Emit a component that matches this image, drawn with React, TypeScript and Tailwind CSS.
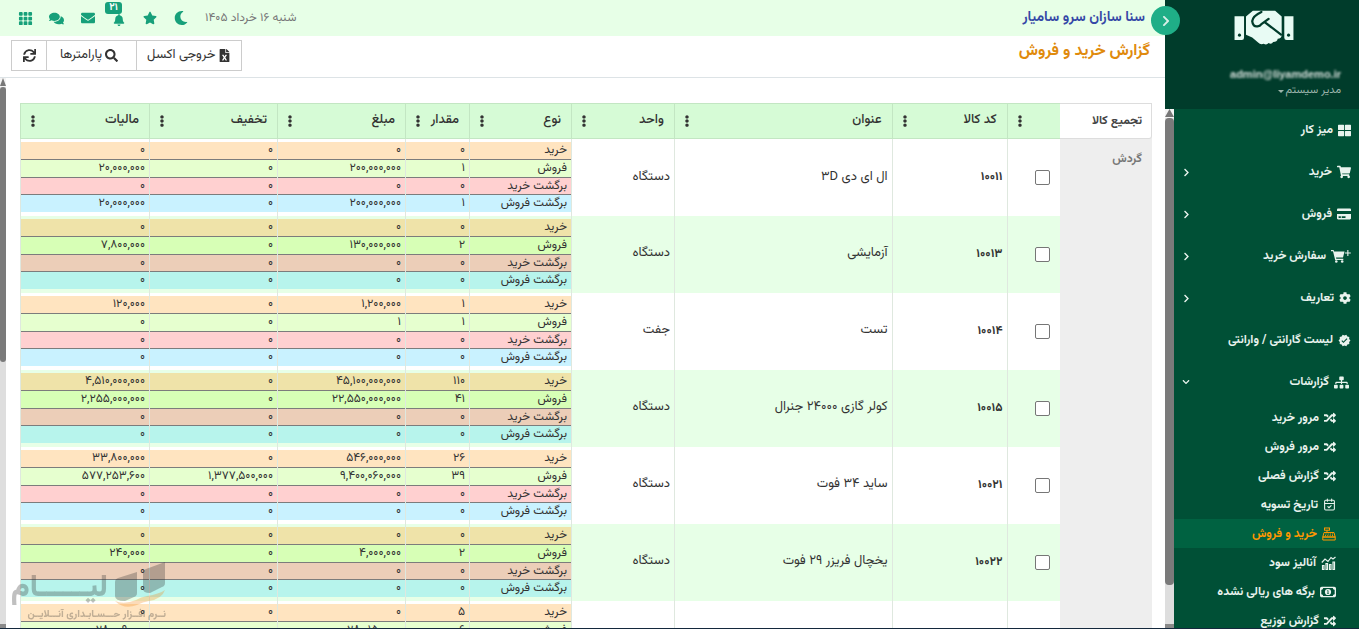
import type { ReactNode } from "react";
import { FaShoppingCart, FaCog, FaSitemap, FaRandom, FaChevronRight, FaChevronDown, FaStar, FaBell, FaEnvelope, FaComments, FaMoon, FaSearch, FaFileExcel, FaEllipsisV, FaSync, FaThLarge, FaCreditCard } from "react-icons/fa";
import { FaRegMoneyBill1 } from "react-icons/fa6";
import { MdVerified } from "react-icons/md";
import { BsGrid3X3GapFill } from "react-icons/bs";
import { CalendarCheck } from "lucide-react";

type Item = { label: string; icon: ReactNode; open?: boolean; arrow?: boolean };

const Handshake = () => (
  <svg viewBox="0 0 180 110" className="mt-[10px] h-9 w-[60px] shrink-0 self-center text-[#e8fbf4]" aria-hidden="true">
    <path fill="currentColor" fillRule="evenodd" d="M0 19h29v66q0 7-7 7H0zM15 72a5 5 0 1 0 .1 0zM152 19h28v73h-21q-7 0-7-7zM165 72a5 5 0 1 0 .1 0z" />
    <path fill="currentColor" d="M56 2h68l20 18v58q-2 10-12 10-2 10-14 10-5 8-14 3-6 7-15 2-10 4-17-4L54 84l-19-8V20z" />
    <path fill="none" stroke="#003c2b" strokeWidth="7" strokeLinecap="round" strokeLinejoin="round" d="M82 6Q56 18 54 34q2 18 16 16 8-1 12-7l22-16M92 37l50 38" />
  </svg>
);

const CartPlus = () => (
  <svg viewBox="0 0 20 14" className="h-[14px] w-5" fill="currentColor" aria-hidden="true">
    <path d="M0 1h2.600l.5 1.600h10.400l-1.500 6H5l.3 1.200h7v1.300H4.200L2 2.300H0z" />
    <circle cx="5.300" cy="12.500" r="1.300" />
    <circle cx="11.200" cy="12.500" r="1.300" />
    <path d="M16.300 1h1.100v2.400h2.400v1.100h-2.400v2.400h-1.100V4.500h-2.400V3.400h2.400z" />
  </svg>
);

const Register = () => (
  <svg viewBox="0 0 14 14" className="size-[14px]" fill="none" stroke="currentColor" strokeWidth="1" aria-hidden="true">
    <rect x="2.500" y="1" width="5" height="2.200" />
    <path d="M5 3.200v2.300M2 5.500h10l1.200 4.500H.8zM.8 10h12.400v3H.8z" />
    <path d="M3.500 7h1M5.700 7h1M7.900 7h1M10 7h1M3 8.600h1M5.300 8.600h1M7.700 8.600h1M10 8.600h1" />
  </svg>
);

const Profit = () => (
  <svg viewBox="0 0 15 14" className="h-[14px] w-[15px]" fill="none" stroke="currentColor" strokeWidth="1.200" aria-hidden="true">
    <path d="M.8 6.500 4 3l3 2.500L10 1.500l2 1.500 2.500-2" />
    <path d="M1.500 9.500h1.500v4H1.500zM5 7.500h1.500v6H5zM8.500 8.500H10v5H8.500zM12 6h1.500v7.500H12z" />
  </svg>
);

const menu: Item[] = [
  { label: "میز کار", icon: <FaThLarge className="size-[13px]" /> },
  { label: "خرید", icon: <FaShoppingCart className="size-[14px]" />, arrow: true },
  { label: "فروش", icon: <FaCreditCard className="size-[14px]" />, arrow: true },
  { label: "سفارش خرید", icon: <CartPlus />, arrow: true },
  { label: "تعاریف", icon: <FaCog className="size-3" />, arrow: true },
  { label: "لیست گارانتی / وارانتی", icon: <MdVerified className="size-[13px]" /> },
  { label: "گزارشات", icon: <FaSitemap className="mr-[2px] size-[15px]" />, arrow: true, open: true },
];

const reports: { label: string; icon: ReactNode; active?: boolean }[] = [
  { label: "مرور خرید", icon: <FaRandom className="size-3" /> },
  { label: "مرور فروش", icon: <FaRandom className="size-3" /> },
  { label: "گزارش فصلی", icon: <FaRandom className="size-3" /> },
  { label: "تاریخ تسویه", icon: <CalendarCheck className="size-[13px]" /> },
  { label: "خرید و فروش", icon: <Register />, active: true },
  { label: "آنالیز سود", icon: <Profit /> },
  { label: "برگه های ریالی نشده", icon: <FaRegMoneyBill1 className="size-4" /> },
  { label: "گزارش توزیع", icon: <FaRandom className="size-3" /> },
];

const kinds = ["خرید", "فروش", "برگشت خرید", "برگشت فروش"];
const z4 = ["۰", "۰", "۰", "۰"];

const rows = [
  { code: "۱۰۰۱۱", title: "ال ای دی ۳D", unit: "دستگاه", qty: ["۰", "۱", "۰", "۱"], amount: ["۰", "۲۰۰,۰۰۰,۰۰۰", "۰", "۲۰۰,۰۰۰,۰۰۰"], off: z4, tax: ["۰", "۲۰,۰۰۰,۰۰۰", "۰", "۲۰,۰۰۰,۰۰۰"] },
  { code: "۱۰۰۱۳", title: "آزمایشی", unit: "دستگاه", qty: ["۰", "۲", "۰", "۰"], amount: ["۰", "۱۳۰,۰۰۰,۰۰۰", "۰", "۰"], off: z4, tax: ["۰", "۷,۸۰۰,۰۰۰", "۰", "۰"] },
  { code: "۱۰۰۱۴", title: "تست", unit: "جفت", qty: ["۱", "۱", "۰", "۰"], amount: ["۱,۲۰۰,۰۰۰", "۱", "۰", "۰"], off: z4, tax: ["۱۲۰,۰۰۰", "۰", "۰", "۰"] },
  { code: "۱۰۰۱۵", title: "کولر گازی ۲۴۰۰۰ جنرال", unit: "دستگاه", qty: ["۱۱۰", "۴۱", "۰", "۰"], amount: ["۴۵,۱۰۰,۰۰۰,۰۰۰", "۲۲,۵۵۰,۰۰۰,۰۰۰", "۰", "۰"], off: z4, tax: ["۴,۵۱۰,۰۰۰,۰۰۰", "۲,۲۵۵,۰۰۰,۰۰۰", "۰", "۰"] },
  { code: "۱۰۰۲۱", title: "ساید ۳۴ فوت", unit: "دستگاه", qty: ["۲۶", "۳۹", "۰", "۰"], amount: ["۵۴۶,۰۰۰,۰۰۰", "۹,۴۰۰,۰۶۰,۰۰۰", "۰", "۰"], off: ["۰", "۱,۳۷۷,۵۰۰,۰۰۰", "۰", "۰"], tax: ["۳۳,۸۰۰,۰۰۰", "۵۷۷,۲۵۳,۶۰۰", "۰", "۰"] },
  { code: "۱۰۰۲۲", title: "یخچال فریزر ۲۹ فوت", unit: "دستگاه", qty: ["۰", "۲", "۰", "۰"], amount: ["۰", "۴,۰۰۰,۰۰۰", "۰", "۰"], off: z4, tax: ["۰", "۲۴۰,۰۰۰", "۰", "۰"] },
  { code: "", title: "", unit: "", qty: ["۵", "۶", "۰", "۰"], amount: ["۰", "۲۸۰,۱۵۰,۰۰۰", "۰", "۰"], off: z4, tax: ["۰", "۲۸,۰۰۹,۰۰۰", "۰", "۰"] },
];

const oddBands = ["bg-[#ffe4c0]", "bg-[#e6ffcf]", "bg-[#ffd0d0]", "bg-[#c9f2ff]"];
const evenBands = ["bg-[#efe3a9]", "bg-[#d7ffb6]", "bg-[#ecceb8]", "bg-[#b7f4ec]"];

function Bands({ values, even }: { values: string[]; even: boolean }) {
  const colors = even ? evenBands : oddBands;
  return (
    <td className="border-l border-[#dfe8df] p-0 align-top">
      <div className="pt-[3px]">
        {values.map((v, i) => (
          <div key={i} className={`px-1 leading-4 ${i < 2 ? "h-[18px]" : "h-[17px]"} ${colors[i]} ${i < 3 ? "border-b border-[#7c7c7c]" : ""}`}>{v}</div>
        ))}
      </div>
    </td>
  );
}

const columns = [
  { label: "", w: "w-[53px]" },
  { label: "کد کالا", w: "w-[115px]" },
  { label: "عنوان", w: "" },
  { label: "واحد", w: "w-[103px]" },
  { label: "نوع", w: "w-[102px]" },
  { label: "مقدار", w: "w-[64px]" },
  { label: "مبلغ", w: "w-[128px]" },
  { label: "تخفیف", w: "w-[128px]" },
  { label: "مالیات", w: "w-[129px]" },
];

function Grid() {
  return (
    <table className="w-full table-fixed border-collapse text-xs text-[#333]">
      <thead>
        <tr className="h-[35px] bg-[#d6fbd6]">
          {columns.map((c, i) => (
            <th key={i} className={`border-b border-l border-t border-[#c3e6c3] p-0 text-[13px] font-medium ${c.w}`}>
              <div className="flex items-center justify-between pl-[6px] pr-[10px]">
                <span>{c.label}</span>
                <button aria-label="منوی ستون" className="flex w-3 justify-center"><FaEllipsisV className="size-3" /></button>
              </div>
            </th>
          ))}
        </tr>
      </thead>
      <tbody>
        {rows.map((r, i) => {
          const even = i % 2 === 1;
          return (
            <tr key={i} className={`h-[77px] ${even ? "bg-[#e7ffe7]" : "bg-white"}`}>
              <td className="border-l border-[#dfe8df] p-0 pr-[10px]">
                <input type="checkbox" aria-label={r.title || "انتخاب"} className="block size-[15px] appearance-none rounded-[2px] border border-[#767676] bg-white" />
              </td>
              <td className="border-l border-[#dfe8df] p-0 px-1 font-bold">{r.code}</td>
              <td className="border-l border-[#dfe8df] p-0 px-1 text-[13px]">{r.title}</td>
              <td className="border-l border-[#dfe8df] p-0 px-1 text-[13px]">{r.unit}</td>
              <Bands values={kinds} even={even} />
              <Bands values={r.qty} even={even} />
              <Bands values={r.amount} even={even} />
              <Bands values={r.off} even={even} />
              <Bands values={r.tax} even={even} />
            </tr>
          );
        })}
      </tbody>
    </table>
  );
}

function ScrollRail({ thumb, width }: { thumb: string; width: string }) {
  return (
    <div aria-hidden="true" className={`flex shrink-0 flex-col bg-[#dedede] ${width}`}>
      <svg viewBox="0 0 9 9" preserveAspectRatio="none" className="h-[9px] w-full shrink-0 bg-[#f4f4f4]"><path d="M4.500 0 9 8H0z" fill="#777" /></svg>
      <div className={`rounded-[4px] bg-[#7a7a7a] ${thumb}`} />
      <svg viewBox="0 0 9 4" preserveAspectRatio="none" className="mt-auto h-1 w-full shrink-0"><path d="M0 0h9v4H0z" fill="#8a8a8a" /></svg>
    </div>
  );
}

function Watermark() {
  return (
    <div className="pointer-events-none absolute bottom-[7px] left-[14px] flex w-[152px] flex-col opacity-30">
      <div className="flex h-[44px] items-end gap-[6px]">
        <svg viewBox="0 0 52 48" className="h-12 w-[52px] shrink-0" aria-hidden="true">
          <path d="M29 12q0-3 3-4l19-7v21q0 3-3 4l-12 6q-7 0-7-4z" fill="#333" />
          <path d="M1 21q0-3 3-4l19-6v21q0 3-3 4l-9 4q-10 0-10-5z" fill="#333" />
          <path d="M1 40q9 4 21-1 5-3 11-4 12-2 18-6-3 9-16 11-6 1-12 4-13 5-22-4z" fill="#f28a1c" />
        </svg>
        <span className="whitespace-nowrap text-[30px] font-black leading-[40px] text-[#333]">لیــــــام</span>
      </div>
      <span className="whitespace-nowrap text-[10px] font-black leading-3 text-[#333]">نــرم افــزار حـــسـابـداری آنـــلایــن</span>
    </div>
  );
}

const topIcons = [
  { label: "حالت شب", icon: <FaMoon className="size-[14px]" /> },
  { label: "علاقه مندی", icon: <FaStar className="size-[14px]" /> },
  { label: "اعلان ها", icon: <FaBell className="mt-1 size-3" />, badge: "۲۱" },
  { label: "پیام ها", icon: <FaEnvelope className="size-[14px]" /> },
  { label: "گفتگو", icon: <FaComments className="size-[15px]" /> },
  { label: "برنامه ها", icon: <BsGrid3X3GapFill className="size-[15px]" /> },
];

function Sidebar() {
  return (
    <aside className="flex w-[194px] shrink-0 flex-col bg-[#005036] text-[#e9f3ee]">
      <div className="flex h-[109px] shrink-0 flex-col bg-[#003c2b] pl-1">
        <Handshake />
        <div className="flex flex-col items-start gap-px pr-[18px] pt-5">
          <span dir="ltr" className="font-['Liberation_Sans'] text-[11px] font-bold leading-4 text-[#d5dfdb] blur-[1px]">admin@liyamdemo.ir</span>
          <button className="flex items-center gap-px text-[11px] leading-4 text-[#9bb3aa]">
            مدیر سیستم
            <svg viewBox="0 0 6 3" className="h-[3px] w-[6px]" fill="currentColor" aria-hidden="true"><path d="M0 0h6L3 3z" /></svg>
          </button>
        </div>
      </div>
      <div className="flex min-h-0 grow">
        <nav className="min-w-0 grow overflow-hidden text-xs font-bold">
          {menu.map((m) => (
            <a key={m.label} href="#" className="flex h-[42px] items-center gap-[5px] pl-2 pr-2">
              {m.icon}
              <span className="grow">{m.label}</span>
              {m.arrow && (m.open ? <FaChevronDown className="size-2" /> : <FaChevronRight className="size-[9px]" />)}
            </a>
          ))}
          {reports.map((m) => (
            <a key={m.label} href="#" className={`flex h-[29px] items-center gap-[5px] pr-[23px] ${m.active ? "bg-[#006241] text-[#ff9800]" : ""}`}>
              {m.icon}
              <span>{m.label}</span>
            </a>
          ))}
        </nav>
        <ScrollRail thumb="h-[90%]" width="w-[9px]" />
      </div>
    </aside>
  );
}

export default function App() {
  return (
    <div dir="rtl" className="relative flex h-screen overflow-hidden border-b border-[#14283c] bg-white font-[Vazirmatn,sans-serif] text-xs text-[#333]">
      <Sidebar />
      <main className="relative flex min-w-0 grow flex-col">
        <button aria-label="بستن منو" className="absolute -right-[15px] top-[6px] z-10 flex size-[29px] items-center justify-center rounded-full bg-[#1fae87] text-[#d8efe7]">
          <FaChevronRight className="size-3" />
        </button>
        <header className="flex h-9 shrink-0 items-center justify-between bg-[#e7ffe7] pl-[10px] pr-5">
          <span className="text-[14px] font-bold text-[#3548a6]">سنا سازان سرو سامیار</span>
          <div className="flex items-center text-[#17a07a]">
            <span className="ml-[9px] text-[#777]">شنبه ۱۶ خرداد ۱۴۰۵</span>
            {topIcons.map((t) => (
              <button key={t.label} aria-label={t.label} className="relative flex h-9 w-[31px] items-center justify-center">
                {t.icon}
                {t.badge && <span className="absolute left-[2px] top-[2px] flex h-3 w-[17px] items-center justify-center rounded-[3px] bg-[#17a07a] text-[10px] font-bold leading-3 text-white">{t.badge}</span>}
              </button>
            ))}
          </div>
        </header>
        <div className="flex h-[42px] shrink-0 items-start justify-between border-b border-[#dde3e6] pl-[11px] pr-[15px] pt-1">
          <h1 className="text-[16px] font-bold leading-6 text-[#e08a0c]">گزارش خرید و فروش</h1>
          <div className="flex h-[31px] border border-[#ccc] text-[13px]">
            <button className="flex items-center gap-[3px] px-[10px]"><FaFileExcel className="size-[13px]" />خروجی اکسل</button>
            <button className="flex w-[90px] items-center gap-[3px] border-r border-[#ccc] pr-[18px]"><FaSearch className="size-[13px]" />پارامترها</button>
            <button aria-label="بازخوانی" className="flex w-[35px] items-center justify-center border-r border-[#ccc]"><FaSync className="size-[13px]" /></button>
          </div>
        </div>
        <div className="flex min-h-0 grow">
          <div className="flex min-w-0 grow overflow-hidden pl-[14px] pr-[13px] pt-[25px]">
            <div role="tablist" aria-orientation="vertical" className="flex w-[92px] shrink-0 flex-col bg-[#eee] font-bold">
              <button role="tab" aria-selected="true" className="h-9 shrink-0 rounded-br-[3px] border-y border-r border-[#ddd] bg-white pr-[9px] text-right text-[#444]">تجمیع کالا</button>
              <button role="tab" aria-selected="false" className="h-10 pr-[10px] text-right text-[#777]">گردش</button>
            </div>
            <div className="min-w-0 grow"><Grid /></div>
          </div>
          <ScrollRail thumb="h-[50%]" width="w-[6px]" />
        </div>
      </main>
      <Watermark />
    </div>
  );
}
